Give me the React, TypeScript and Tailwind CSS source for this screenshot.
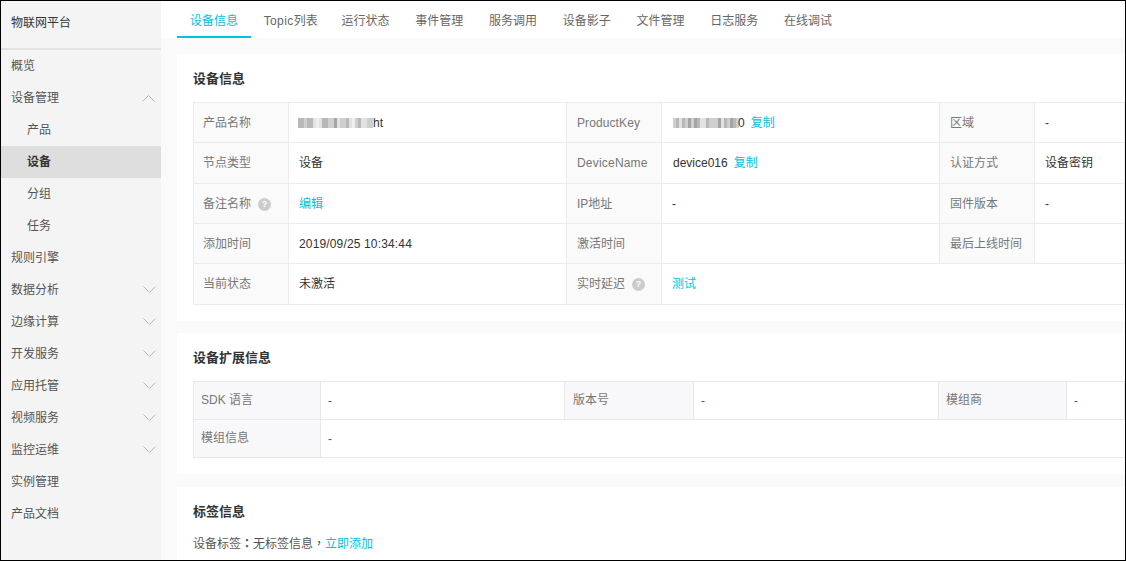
import React from "react";

const FONT = "[font-family:'Liberation_Sans','Noto_Sans_CJK_SC',sans-serif]";

const Chevron = ({ up = false }: { up?: boolean }) => (
  <svg width="14" height="8" viewBox="0 0 14 8" fill="none" className={up ? "mr-[1px] block" : "block"}>
    <path d={up ? "M0.5 7.5L6.5 1.5L12.5 7.5" : "M0.5 0.5L6.5 6.5L12.5 0.5"} stroke="#b4b4b4" strokeWidth="1" />
  </svg>
);

const Help = () => (
  <span className="ml-[7px] inline-flex h-[13px] w-[13px] items-center justify-center rounded-full bg-[#cccccc] text-[9px] font-bold leading-none text-white">
    ?
  </span>
);

const Mosaic = ({ cells }: { cells: string }) => (
  <span className="inline-flex h-[12px] items-center align-middle">
    {cells.split("").map((c, i) => {
      const color = { a: "#b8b8b8", b: "#cfcfcf", c: "#e2e2e2", d: "#a4a4a4", e: "#efefef" }[c] ?? "#dddddd";
      return <span key={i} className="h-[10px] w-[3px]" style={{ backgroundColor: color }} />;
    })}
  </span>
);

type Nav = { t: string; sub?: boolean; active?: boolean; chev?: "up" | "down" };
const nav: Nav[] = [
  { t: "概览" },
  { t: "设备管理", chev: "up" },
  { t: "产品", sub: true },
  { t: "设备", sub: true, active: true },
  { t: "分组", sub: true },
  { t: "任务", sub: true },
  { t: "规则引擎" },
  { t: "数据分析", chev: "down" },
  { t: "边缘计算", chev: "down" },
  { t: "开发服务", chev: "down" },
  { t: "应用托管", chev: "down" },
  { t: "视频服务", chev: "down" },
  { t: "监控运维", chev: "down" },
  { t: "实例管理" },
  { t: "产品文档" },
];

const tabs = ["设备信息", "Topic列表", "运行状态", "事件管理", "服务调用", "设备影子", "文件管理", "日志服务", "在线调试"];

const Label = ({
  children,
  alt = false,
  pl = "pl-[9px]",
  className = "",
}: {
  children: React.ReactNode;
  alt?: boolean;
  pl?: string;
  className?: string;
}) => (
  <div
    className={
      (alt
        ? "flex items-center border-b border-r border-[#e8e8e8] bg-[#f8f8fa] pb-[2px] text-[#777777] "
        : "flex items-center border-b border-r border-[#ebebeb] bg-[#fafafa] text-[#777777] ") +
      pl +
      " " +
      className
    }
  >
    {children}
  </div>
);

const Value = ({
  children,
  alt = false,
  pl = "pl-[10px]",
  className = "",
}: {
  children?: React.ReactNode;
  alt?: boolean;
  pl?: string;
  className?: string;
}) => (
  <div
    className={
      (alt
        ? "flex items-center border-b border-r border-[#e8e8e8] text-[#555555] "
        : "flex items-center border-b border-r border-[#ebebeb] text-[#333333] ") +
      pl +
      " " +
      className
    }
  >
    {children}
  </div>
);

const Link = ({ children, className = "" }: { children: React.ReactNode; className?: string }) => (
  <span className={"text-[#00c1de] " + className}>{children}</span>
);

const Heading = ({ children }: { children: React.ReactNode }) => (
  <h2 className="text-[13px] font-bold leading-[18px] text-[#333333]">{children}</h2>
);

export default function App() {
  return (
    <div className={"box-border flex h-[561px] w-[1126px] overflow-hidden border border-black bg-white text-[12px] " + FONT}>
      <aside className="flex w-[160px] shrink-0 flex-col bg-[#f4f4f4] text-[#555555]">
        <div className="flex h-[49px] shrink-0 items-center border-b-2 border-[#e3e3e3] pb-[3px] pl-[10px] text-[#333333]">
          物联网平台
        </div>
        {nav.map((n) => (
          <div
            key={n.t}
            className={
              "flex h-[32px] shrink-0 items-center justify-between pr-[4px] " +
              (n.sub ? "pl-[26px] " : "pl-[10px] ") +
              (n.active ? "bg-[#dedede] font-bold text-[#333333]" : "")
            }
          >
            <span>{n.t}</span>
            {n.chev ? <Chevron up={n.chev === "up"} /> : null}
          </div>
        ))}
      </aside>

      <main className="flex min-w-0 flex-1 flex-col bg-[#fafafa]">
        <nav className="flex h-[37px] shrink-0 bg-white pl-[16px]">
          {tabs.map((t, i) => (
            <div
              key={t}
              className={
                i === 0
                  ? "flex h-[37px] items-center border-b-2 border-[#00c1de] px-[12.875px] pt-[5px] text-[#00c1de]"
                  : "flex h-[37px] items-center px-[12.875px] pb-[2px] pt-[5px] text-[#666666]"
              }
            >
              {i === 1 ? (
                <span className="-mr-[2px]">
                  <span className="tracking-[0.4px]">Topic</span>列表
                </span>
              ) : (
                t
              )}
            </div>
          ))}
        </nav>

        <div className="ml-[16px] mt-[16px] flex min-w-0 flex-col">
          <section className="box-border h-[267px] shrink-0 bg-white pl-[16px] pt-[16px]">
            <Heading>设备信息</Heading>
            <div className="mt-[14px] grid grid-cols-[95px_278px_95px_278px_95px_1fr] grid-rows-[40px_41px_40px_40px_41px] border-l border-t border-[#ebebeb]">
              <Label className="pt-[1px]">产品名称</Label>
              <Value className="pt-[1px]">
                <span className="-ml-[1px] inline-flex items-center">
                  <Mosaic cells="aabaacecaabbdcbbacebaccbb" />
                  <span>ht</span>
                </span>
              </Value>
              <Label pl="pl-[10px]" className="pt-[1px] tracking-[0.1px]">ProductKey</Label>
              <Value pl="pl-[11px]" className="pt-[1px]">
                <Mosaic cells="bacabdbdaccabbbdcabdab" />
                <span className="-ml-[1px]">0</span>
                <Link className="ml-[6px]">复制</Link>
              </Value>
              <Label pl="pl-[10px]" className="pt-[1px]">区域</Label>
              <Value className="pt-[1px]">-</Value>

              <Label>节点类型</Label>
              <Value>设备</Value>
              <Label pl="pl-[10px]" className="tracking-[0.2px]">DeviceName</Label>
              <Value pl="pl-[11px]">
                device016<Link className="ml-[6px]">复制</Link>
              </Value>
              <Label pl="pl-[10px]">认证方式</Label>
              <Value>设备密钥</Value>

              <Label className="pt-[1px]">
                备注名称
                <Help />
              </Label>
              <Value className="pt-[1px]">
                <Link>编辑</Link>
              </Value>
              <Label pl="pl-[10px]" className="pt-[1px]">IP地址</Label>
              <Value className="pt-[1px]">-</Value>
              <Label pl="pl-[10px]" className="pt-[1px]">固件版本</Label>
              <Value className="pt-[1px]">-</Value>

              <Label>添加时间</Label>
              <Value className="tracking-[0.15px]">2019/09/25 10:34:44</Value>
              <Label pl="pl-[10px]">激活时间</Label>
              <Value />
              <Label pl="pl-[10px]">最后上线时间</Label>
              <Value />

              <Label>当前状态</Label>
              <Value>未激活</Value>
              <Label pl="pl-[10px]">
                实时延迟
                <Help />
              </Label>
              <Value className="col-span-3 border-r-0">
                <Link>测试</Link>
              </Value>
            </div>
          </section>

          <section className="mt-[12px] box-border h-[141px] shrink-0 bg-white pl-[16px] pt-[16px]">
            <Heading>设备扩展信息</Heading>
            <div className="mt-[14px] grid grid-cols-[127px_244px_129px_245px_128px_1fr] grid-rows-[38px_38px] border-l border-t border-[#e8e8e8]">
              <Label alt pl="pl-[7px]">SDK 语言</Label>
              <Value alt pl="pl-[7px]">-</Value>
              <Label alt pl="pl-[8px]">版本号</Label>
              <Value alt pl="pl-[7px]">-</Value>
              <Label alt pl="pl-[7px]">模组商</Label>
              <Value alt pl="pl-[7px]">-</Value>
              <Label alt pl="pl-[7px]">模组信息</Label>
              <div className="col-span-5 flex items-center border-b border-[#e8e8e8] pl-[7px] text-[#555555]">-</div>
            </div>
          </section>

          <section className="mt-[13px] box-border h-[80px] shrink-0 bg-white pl-[16px] pt-[16px]">
            <Heading>标签信息</Heading>
            <p className="mt-[13px] text-[#555555]">
              设备标签<span className="font-bold [font-family:'Noto_Sans_CJK_TC',sans-serif]">：</span>无标签信息
              <span className="[font-family:'Noto_Sans_CJK_TC',sans-serif]">，</span>
              <Link>立即添加</Link>
            </p>
          </section>
        </div>
      </main>
    </div>
  );
}
